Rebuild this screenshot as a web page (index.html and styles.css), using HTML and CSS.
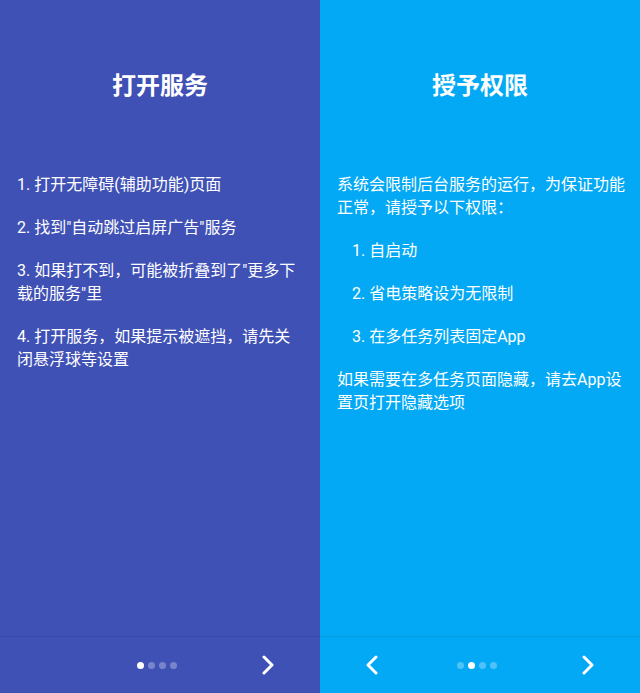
FILE: index.html
```html
<!DOCTYPE html>
<html lang="zh-CN">
<head>
<meta charset="utf-8">
<title>引导</title>
<link rel="stylesheet" href="styles.css">
</head>
<body>
<div class="screens">
  <section class="panel panel-indigo">
    <h1 class="title">打开服务</h1>
    <div class="content">
      <p class="para">1. 打开无障碍(辅助功能)页面</p>
      <p class="para">2. 找到"自动跳过启屏广告"服务</p>
      <p class="para">3. 如果打不到，可能被折叠到了"更多下载的服务"里</p>
      <p class="para">4. 打开服务，如果提示被遮挡，请先关闭悬浮球等设置</p>
    </div>
    <div class="bottom-bar">
      <div class="nav-btn"></div>
      <div class="dots">
        <span class="dot active"></span><span class="dot"></span><span class="dot"></span><span class="dot"></span>
      </div>
      <div class="nav-btn">
        <svg class="chev" viewBox="0 0 12 20" width="12" height="20"><path d="M2 2 L10 10 L2 18" fill="none" stroke="#fff" stroke-width="3" stroke-linecap="round" stroke-linejoin="round"/></svg>
      </div>
    </div>
  </section>
  <section class="panel panel-blue">
    <h1 class="title">授予权限</h1>
    <div class="content">
      <p class="para">系统会限制后台服务的运行，为保证功能正常，请授予以下权限：</p>
      <p class="para sub">1. 自启动</p>
      <p class="para sub">2. 省电策略设为无限制</p>
      <p class="para sub">3. 在多任务列表固定App</p>
      <p class="para">如果需要在多任务页面隐藏，请去App设置页打开隐藏选项</p>
    </div>
    <div class="bottom-bar">
      <div class="nav-btn">
        <svg class="chev" viewBox="0 0 12 20" width="12" height="20"><path d="M10 2 L2 10 L10 18" fill="none" stroke="#fff" stroke-width="3" stroke-linecap="round" stroke-linejoin="round"/></svg>
      </div>
      <div class="dots">
        <span class="dot"></span><span class="dot active"></span><span class="dot"></span><span class="dot"></span>
      </div>
      <div class="nav-btn">
        <svg class="chev" viewBox="0 0 12 20" width="12" height="20"><path d="M2 2 L10 10 L2 18" fill="none" stroke="#fff" stroke-width="3" stroke-linecap="round" stroke-linejoin="round"/></svg>
      </div>
    </div>
  </section>
</div>
</body>
</html>
```

FILE: styles.css
```css
* { box-sizing: border-box; }
html, body { margin: 0; padding: 0; }
body {
  width: 640px;
  height: 693px;
  overflow: hidden;
  font-family: Roboto, "Noto Sans CJK SC", sans-serif;
  color: #fff;
}
.screens {
  display: grid;
  grid-template-columns: 320px 320px;
  height: 693px;
}
.panel {
  display: flex;
  flex-direction: column;
  height: 693px;
}
.panel-indigo { background: #3f51b5; }
.panel-blue { background: #03a9f4; }
.title {
  margin: 0;
  padding-top: 68px;
  font-size: 24px;
  line-height: 32px;
  font-weight: 700;
  text-align: center;
  font-family: "Noto Sans CJK SC", sans-serif;
}
.content {
  flex: 1;
  padding: 73px 15px 0 17px;
}
.para {
  margin: 0 0 20px;
  font-size: 16px;
  line-height: 23px;
}
.para.sub { padding-left: 15px; }
.bottom-bar {
  height: 57px;
  border-top: 1px solid rgba(0, 0, 0, 0.08);
  display: grid;
  grid-template-columns: 104px 1fr 104px;
  align-items: center;
}
.nav-btn {
  display: flex;
  justify-content: center;
  align-items: center;
  height: 100%;
}
.chev { display: block; }
.dots {
  display: flex;
  justify-content: center;
  gap: 4px;
  margin-right: 6px;
}
.dot {
  width: 7px;
  height: 7px;
  border-radius: 50%;
  background: rgba(255, 255, 255, 0.3);
}
.dot.active { background: #fff; }
```
